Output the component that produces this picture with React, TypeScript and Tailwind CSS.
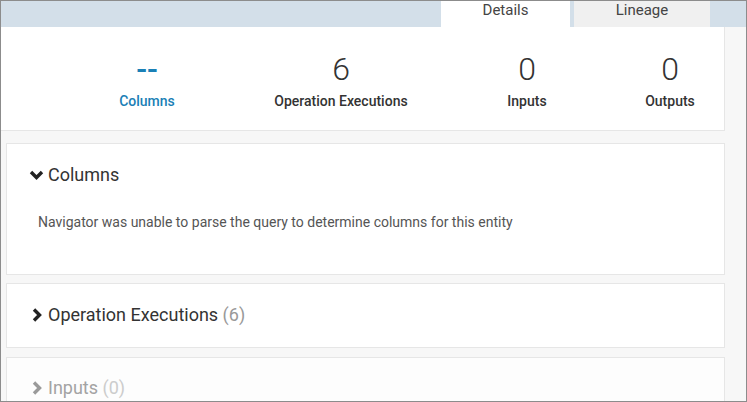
import React from "react";

type Stat = { value: string; label: string; width: string; accent?: boolean };

const stats: Stat[] = [
  { value: "--", label: "Columns", width: "w-[194px]", accent: true },
  { value: "6", label: "Operation Executions", width: "w-[194px]" },
  { value: "0", label: "Inputs", width: "w-[178px]" },
  { value: "0", label: "Outputs", width: "w-[108px]" },
];

function ChevronDown({ color = "#222" }: { color?: string }) {
  return (
    <svg width="15" height="10" viewBox="0 0 15 10">
      <path d="M2 2 L7.5 7.5 L13 2" fill="none" stroke={color} strokeWidth="3.4" strokeLinejoin="miter" />
    </svg>
  );
}

function ChevronRight({ color = "#222" }: { color?: string }) {
  return (
    <svg width="10" height="14" viewBox="0 0 10 14" className="ml-[3px]">
      <path d="M2 1.5 L7.5 7 L2 12.5" fill="none" stroke={color} strokeWidth="3.4" strokeLinejoin="miter" />
    </svg>
  );
}

function SectionHeader({
  title,
  count,
  open,
  disabled,
}: {
  title: string;
  count?: number;
  open?: boolean;
  disabled?: boolean;
}) {
  const chevronColor = disabled ? "#9a9a9a" : "#222";
  return (
    <div className="flex items-center h-[24px]">
      <div className="w-[19px] flex items-center">
        {open ? <ChevronDown color={chevronColor} /> : <ChevronRight color={chevronColor} />}
      </div>
      <span className={`text-[18px] leading-[24px] ${disabled ? "text-[#a3a3a3]" : "text-[#333]"}`}>
        {title}
        {count !== undefined && (
          <span className={disabled ? "text-[#cccccc]" : "text-[#999]"}> ({count})</span>
        )}
      </span>
    </div>
  );
}

export default function App() {
  return (
    <div
      className="w-[747px] h-[402px] border border-[#8c8c8c] overflow-hidden bg-[#f7f7f7] flex flex-col"
      style={{ fontFamily: "Roboto, 'Liberation Sans', sans-serif" }}
    >
      {/* tab bar */}
      <div className="h-[26px] shrink-0 bg-[#d3dfe9] flex justify-end pr-[36px] gap-[4px]">
        <div className="w-[129px] bg-white text-center text-[15px] leading-[18px] text-[#444]">Details</div>
        <div className="w-[136px] bg-[#f0f0f0] text-center text-[15px] leading-[18px] text-[#444]">Lineage</div>
      </div>

      <div className="flex flex-1 min-h-0">
        <div className="w-[724px] shrink-0 flex flex-col">
          {/* summary */}
          <div className="bg-white border-r border-b border-[#e6e6e6] pt-[24px] pb-[19px] pl-[49px] flex">
            {stats.map((s) => (
              <div key={s.label} className={`${s.width} flex flex-col items-center`}>
                <div
                  className={`text-[32px] leading-[36px] ${
                    s.accent ? "text-[#1a80b6] font-medium" : "text-[#333] font-light"
                  }`}
                >
                  {s.value}
                </div>
                <div
                  className={`mt-[4px] text-[14px] leading-[20px] font-medium ${
                    s.accent ? "text-[#1a80b6]" : "text-[#333]"
                  }`}
                >
                  {s.label}
                </div>
              </div>
            ))}
          </div>

          {/* sections */}
          <div className="pl-[5px] flex flex-col">
            <div className="mt-[12px] bg-white border border-[#e6e6e6] pt-[19px] pb-[42px] pl-[22px] h-[132px]">
              <SectionHeader title="Columns" open />
              <p className="mt-[25px] pl-[9px] text-[14px] leading-[20px] text-[#555]">
                Navigator was unable to parse the query to determine columns for this entity
              </p>
            </div>
            <div className="mt-[8px] bg-white border border-[#e6e6e6] pt-[19px] pl-[22px] h-[65px]">
              <SectionHeader title="Operation Executions" count={6} />
            </div>
            <div className="mt-[9px] bg-[#fdfdfd] border border-[#e6e6e6] pt-[18px] pl-[22px] h-[65px]">
              <SectionHeader title="Inputs" count={0} disabled />
            </div>
          </div>
        </div>
        <div className="flex-1" />
      </div>
    </div>
  );
}
